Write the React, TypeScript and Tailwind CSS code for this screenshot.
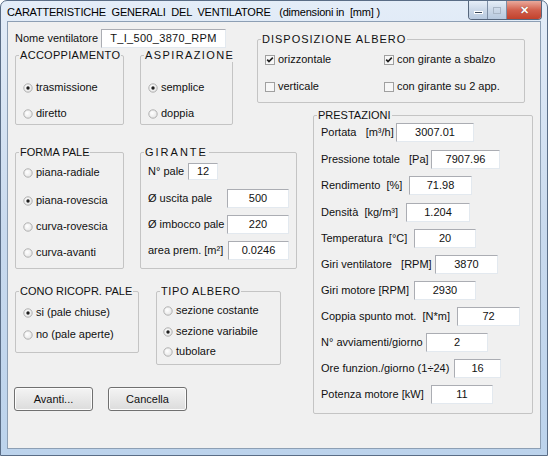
import React from "react";

function Radio({ on }: { on?: boolean }) {
  return (
    <svg width="10" height="10" viewBox="0 0 10 10" className="shrink-0">
      <defs>
        <radialGradient id="rg" cx="0.4" cy="0.4" r="0.7">
          <stop offset="0" stopColor="#ffffff" />
          <stop offset="1" stopColor="#e2e2e2" />
        </radialGradient>
      </defs>
      <circle cx="5" cy="5" r="4.2" fill="url(#rg)" stroke="#b0b0b0" strokeWidth="1" />
      {on && <circle cx="5" cy="5" r="1.7" fill="#1e1e1e" />}
    </svg>
  );
}

function Check({ on }: { on?: boolean }) {
  return (
    <svg width="10" height="10" viewBox="0 0 10 10" className="shrink-0">
      <rect x="0.5" y="0.5" width="9" height="9" fill="#f7f7f7" stroke="#a0a0a0" />
      {on && <path d="M2.2 4.6 L4 6.6 L7.8 2.6" fill="none" stroke="#1e1e1e" strokeWidth="1.6" />}
    </svg>
  );
}

function Group({ title, className, titleClass, children }: { title: string; className: string; titleClass?: string; children?: React.ReactNode }) {
  return (
    <div className={"relative border border-[#c4c4c4] rounded-[2px] " + className}>
      <span className={"absolute left-[3px] top-[-7px] bg-[#f0f0f0] px-[1px] leading-[13px] whitespace-pre " + (titleClass ?? "")}>{title}</span>
      {children}
    </div>
  );
}

function Box({ value, className }: { value: string; className: string }) {
  return (
    <div className={"shrink-0 border border-[#abadb3] border-r-[#e3e9ef] border-b-[#e3e9ef] bg-white flex items-center justify-center leading-[13px] " + className}>
      {value}
    </div>
  );
}

function RadioRow({ label, on, className }: { label: string; on?: boolean; className: string }) {
  return (
    <div className={"flex items-center h-[13px] gap-[3px] " + className}>
      <Radio on={on} />
      <span className="leading-[13px] whitespace-pre">{label}</span>
    </div>
  );
}

const prest = [
  { label: "Portata   [m³/h]", lw: "w-[75px]", bw: "w-[78px]", v: "3007.01", rh: "h-[27px]" },
  { label: "Pressione totale   [Pa]", lw: "w-[110px]", bw: "w-[69px]", v: "7907.96", rh: "h-[26px]" },
  { label: "Rendimento  [%]", lw: "w-[88px]", bw: "w-[63px]", v: "71.98", rh: "h-[27px]" },
  { label: "Densità  [kg/m³]", lw: "w-[85px]", bw: "w-[64px]", v: "1.204", rh: "h-[26px]" },
  { label: "Temperatura  [°C]", lw: "w-[93px]", bw: "w-[62px]", v: "20", rh: "h-[26px]" },
  { label: "Giri ventilatore   [RPM]", lw: "w-[114px]", bw: "w-[63px]", v: "3870", rh: "h-[26px]" },
  { label: "Giri motore [RPM]", lw: "w-[93px]", bw: "w-[62px]", v: "2930", rh: "h-[26px]" },
  { label: "Coppia spunto mot.  [N*m]", lw: "w-[136px]", bw: "w-[63px]", v: "72", rh: "h-[26px]" },
  { label: "N° avviamenti/giorno", lw: "w-[105px]", bw: "w-[62px]", v: "2", rh: "h-[26px]" },
  { label: "Ore funzion./giorno (1÷24)", lw: "w-[133px]", bw: "w-[47px]", v: "16", rh: "h-[26px]" },
  { label: "Potenza motore [kW]", lw: "w-[110px]", bw: "w-[62px]", v: "11", rh: "h-[19px]" },
];

function Button({ label }: { label: string }) {
  return (
    <div className="w-[79px] h-[24px] border border-[#707070] rounded-[3px] bg-gradient-to-b from-[#f4f4f4] to-[#dcdcdc] flex items-center justify-center shadow-[inset_0_0_0_1px_#fcfcfc]">
      {label}
    </div>
  );
}

export default function App() {
  return (
    <div className="w-[548px] h-[456px] bg-white font-['Liberation_Sans',Arial,sans-serif] text-[11px] text-[#111]">
      <div className="w-[548px] h-[456px] rounded-t-[7px] border border-[#5a6d86] bg-gradient-to-b from-[#e4edf8] via-[#c9daee] to-[#bcd3ec] flex flex-col px-[6px] pb-[6px]">
        {/* title bar */}
        <div className="h-[20px] flex items-start shrink-0">
          <div className="pt-[4px] pl-[0px] text-[11px] leading-[14px] whitespace-pre text-black tracking-[-0.2px]">
            CARATTERISTICHE  GENERALI  DEL  VENTILATORE   (dimensioni in  [mm] )
          </div>
          <div className="ml-auto mr-[-1px] flex h-[19px] border border-t-0 border-[#57677d] rounded-b-[4px] overflow-hidden">
            <div className="w-[19px] h-full bg-gradient-to-b from-[#e6eef8] via-[#cbd8e8] to-[#b7c9df] border-r border-[#7d8ea5] flex items-center justify-center">
              <div className="w-[9px] h-[3px] bg-[#3b4a5d] border border-white mt-[5px]" />
            </div>
            <div className="w-[19px] h-full bg-gradient-to-b from-[#e6eef8] via-[#cbd8e8] to-[#b7c9df] border-r border-[#7d8ea5] flex items-center justify-center">
              <div className="w-[8px] h-[7px] border border-[#a9b6c6]" />
            </div>
            <div className="w-[34px] h-full bg-gradient-to-b from-[#e9a99c] via-[#d2604d] to-[#c2412c] flex items-center justify-center text-white font-bold text-[11px] leading-none [text-shadow:0_0_1px_#5a1a10]">
              ✕
            </div>
          </div>
        </div>
        {/* client */}
        <div className="flex-1 border border-[#8d9fb4] bg-[#f0f0f0] pl-[7px] flex flex-col">
          {/* top section */}
          <div className="flex items-start">
            <div className="flex flex-col">
              <div className="flex items-center mt-[7px] h-[19px]">
                <span className="w-[86px]">Nome ventilatore</span>
                <Box value="T_I_500_3870_RPM" className="w-[125px] h-[19px] tracking-[0.3px]" />
              </div>
              <div className="flex mt-[7px] gap-[16px]">
                <Group title="ACCOPPIAMENTO" titleClass="tracking-[0.3px]" className="w-[109px] h-[70px] pl-[7px] pt-[25px]">
                  <RadioRow label="trasmissione" on className="" />
                  <RadioRow label="diretto" className="mt-[13px]" />
                </Group>
                <Group title="ASPIRAZIONE" titleClass="tracking-[1.4px]" className="w-[93px] h-[70px] pl-[7px] pt-[25px]">
                  <RadioRow label="semplice" on className="" />
                  <RadioRow label="doppia" className="mt-[13px]" />
                </Group>
              </div>
            </div>
            <Group title="DISPOSIZIONE ALBERO" titleClass="tracking-[1px]" className="ml-[24px] mt-[17px] w-[268px] h-[64px] pl-[7px] pt-[13px]">
              <div className="grid grid-cols-[119px_1fr] gap-y-[14px]">
                <div className="flex items-center h-[13px] gap-[3px]"><Check on /><span>orizzontale</span></div>
                <div className="flex items-center h-[13px] gap-[3px]"><Check on /><span>con girante a sbalzo</span></div>
                <div className="flex items-center h-[13px] gap-[3px]"><Check /><span>verticale</span></div>
                <div className="flex items-center h-[13px] gap-[3px]"><Check /><span>con girante su 2 app.</span></div>
              </div>
            </Group>
          </div>
          {/* bottom section */}
          <div className="flex items-start">
            <div className="flex flex-col">
              <div className="flex mt-[27px] gap-[16px]">
                <Group title="FORMA PALE" className="w-[109px] h-[117px] pl-[7px] pt-[13px]">
                  <RadioRow label="piana-radiale" className="" />
                  <RadioRow label="piana-rovescia" on className="mt-[15px]" />
                  <RadioRow label="curva-rovescia" className="mt-[13px]" />
                  <RadioRow label="curva-avanti" className="mt-[13px]" />
                </Group>
                <Group title="GIRANTE" titleClass="tracking-[2px]" className="w-[157px] h-[117px] pl-[7px] pt-[10px]">
                  <div className="flex items-center h-[17px]">
                    <span className="w-[40px]">N° pale</span>
                    <Box value="12" className="w-[30px] h-[17px]" />
                  </div>
                  <div className="flex items-center h-[19px] mt-[9px]">
                    <span className="w-[79px]">Ø uscita pale</span>
                    <Box value="500" className="w-[62px] h-[19px]" />
                  </div>
                  <div className="flex items-center h-[19px] mt-[7px]">
                    <span className="w-[79px]">Ø imbocco pale</span>
                    <Box value="220" className="w-[62px] h-[19px]" />
                  </div>
                  <div className="flex items-center h-[19px] mt-[7px]">
                    <span className="w-[80px]">area prem. [m²]</span>
                    <Box value="0.0246" className="w-[61px] h-[19px]" />
                  </div>
                </Group>
              </div>
              <div className="flex items-start mt-[22px] gap-[17px]">
                <Group title="CONO RICOPR. PALE" className="w-[124px] h-[62px] pl-[7px] pt-[14px]">
                  <RadioRow label="si (pale chiuse)" on className="" />
                  <RadioRow label="no (pale aperte)" className="mt-[9px]" />
                </Group>
                <Group title="TIPO ALBERO" titleClass="tracking-[0.6px]" className="w-[125px] h-[74px] pl-[6px] pt-[12px]">
                  <RadioRow label="sezione costante" className="" />
                  <RadioRow label="sezione variabile" on className="mt-[8px]" />
                  <RadioRow label="tubolare" className="mt-[7px]" />
                </Group>
              </div>
              <div className="flex mt-[22px] ml-[-1px] gap-[15px]">
                <Button label="Avanti..." />
                <Button label="Cancella" />
              </div>
            </div>
            <Group title="PRESTAZIONI" className="ml-[16px] mt-[-10px] w-[220px] h-[299px] pl-[7px] pt-[7px]">
              {prest.map((r) => (
                <div key={r.label} className={"flex items-start " + r.rh}>
                  <div className="flex items-center h-[19px]">
                    <span className={"whitespace-pre " + r.lw}>{r.label}</span>
                    <Box value={r.v} className={"h-[19px] " + r.bw} />
                  </div>
                </div>
              ))}
            </Group>
          </div>
        </div>
      </div>
    </div>
  );
}
